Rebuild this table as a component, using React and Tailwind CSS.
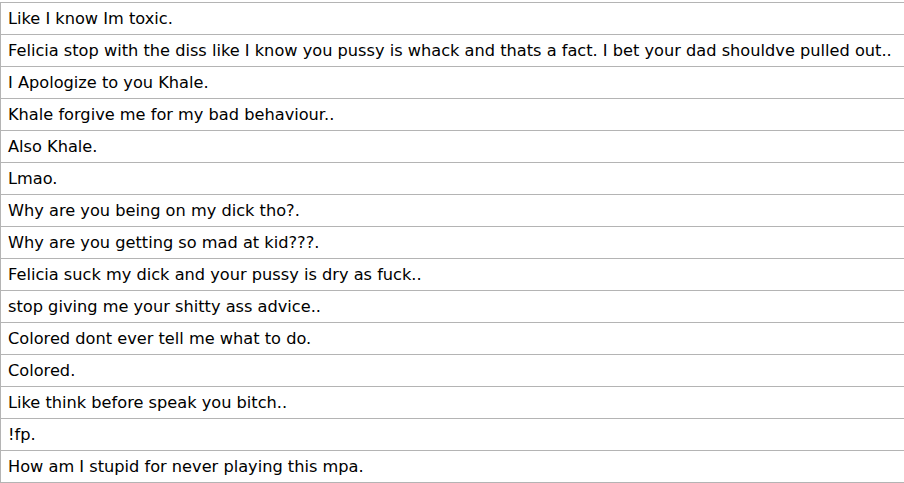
const messages = [
  'Like I know Im toxic.',
  'Felicia stop with the diss like I know you pussy is whack and thats a fact. I bet your dad shouldve pulled out..',
  'I Apologize to you Khale.',
  'Khale forgive me for my bad behaviour..',
  'Also Khale.',
  'Lmao.',
  'Why are you being on my dick tho?.',
  'Why are you getting so mad at kid???.',
  'Felicia suck my dick and your pussy is dry as fuck..',
  'stop giving me your shitty ass advice..',
  'Colored dont ever tell me what to do.',
  'Colored.',
  'Like think before speak you bitch..',
  '!fp.',
  'How am I stupid for never playing this mpa.',
]

export default function App() {
  return (
    <div className="min-h-screen bg-white pt-[2px] font-['DejaVu_Sans',Verdana,sans-serif] text-[16.2px] text-black">
      <div className="border-b border-[#b4b4b4]">
        {messages.map((m, i) => (
          <div
            key={i}
            className="flex h-[32px] items-center whitespace-nowrap border-t border-l border-[#b4b4b4] pl-[7px] pt-[1px]"
          >
            {m}
          </div>
        ))}
      </div>
    </div>
  )
}
